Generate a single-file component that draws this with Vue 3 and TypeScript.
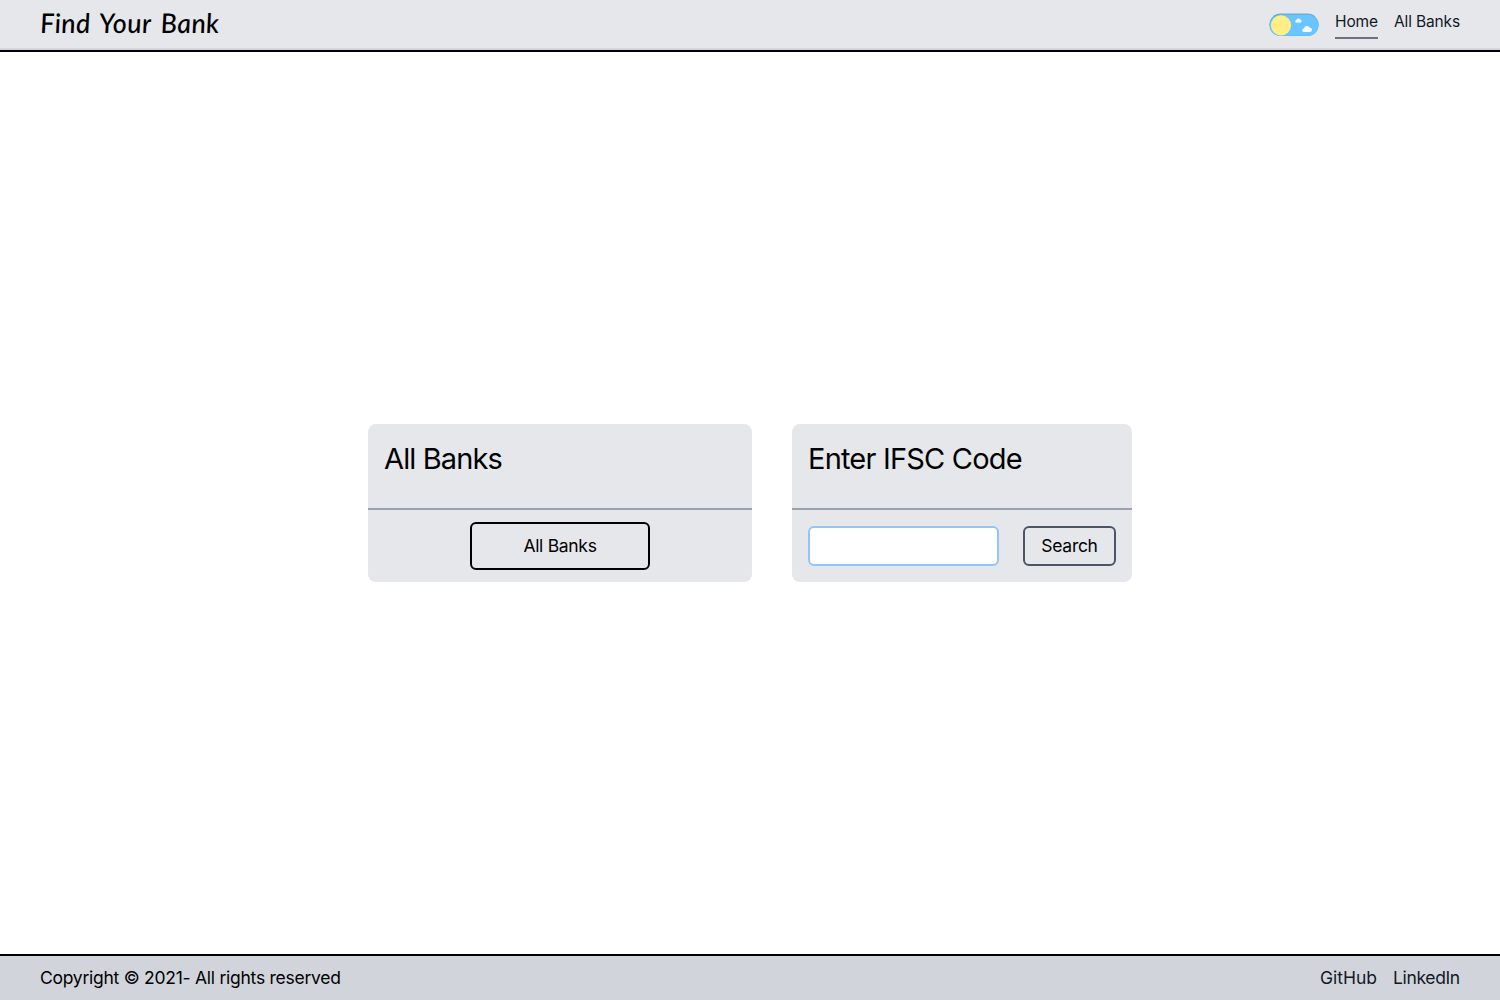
<script setup lang="ts">
import { ref } from 'vue'

const ifsc = ref('')
const year = 2021
</script>

<template>
  <div class="page">
    <header class="header">
      <h1 class="brand">Find Your Bank</h1>
      <nav class="nav">
        <svg class="toggle" width="50" height="24" viewBox="0 0 50 24" aria-hidden="true">
          <rect x="0.3" y="0.6" width="49.4" height="22.4" rx="11.2" fill="#62aedb" />
          <rect x="0.8" y="1.8" width="48.6" height="21" rx="10.5" fill="#69c5ff" />
          <circle cx="12" cy="12.4" r="10.1" fill="#ffed85" />
          <path d="M27 9.5a1.4 1.4 0 0 1 .4-2.6 2.2 2.2 0 0 1 4-.2 1.5 1.5 0 0 1 .3 2.8z" fill="#fff" />
          <path d="M34.5 18.9a1.8 1.8 0 0 1 .3-3.5 3.2 3.2 0 0 1 6-.7 2.1 2.1 0 0 1 .2 4.2z" fill="#fff" />
        </svg>
        <a class="link active">Home</a>
        <a class="link banks">All Banks</a>
      </nav>
    </header>

    <main class="main">
      <section class="card wide">
        <div class="card-head"><h2>All Banks</h2></div>
        <div class="card-body">
          <button class="all-button">All Banks</button>
        </div>
      </section>
      <section class="card narrow">
        <div class="card-head"><h2 class="ifsc-title">Enter IFSC Code</h2></div>
        <form class="card-body form" @submit.prevent>
          <input v-model="ifsc" class="field" type="text" aria-label="IFSC code" />
          <button class="search">Search</button>
        </form>
      </section>
    </main>

    <footer class="footer">
      <span class="copyright">Copyright © {{ year }}- All rights reserved</span>
      <div class="socials">
        <a class="github">GitHub</a>
        <a class="linkedin">LinkedIn</a>
      </div>
    </footer>
  </div>
</template>

<style>
body { margin: 0; }
</style>

<style scoped>
* { box-sizing: border-box; }
.page {
  display: flex;
  flex-direction: column;
  height: 100vh;
  background: #fff;
  color: #000;
  font: 17.5px/28px Inter, sans-serif;
}
.header {
  display: flex;
  justify-content: space-between;
  align-items: flex-start;
  height: 52px;
  padding: 0 40px;
  background: #e5e7eb;
  border-bottom: 2px solid #000;
  box-shadow: inset 0 -2px #d1d5db;
}
.brand {
  margin: 3px 0 0;
  font: italic 500 27px/40px Lato, sans-serif;
  letter-spacing: 0.35px;
  word-spacing: 3px;
  white-space: nowrap;
  transform: skewX(4deg);
}
.nav {
  display: flex;
  gap: 16px;
  color: #111827;
  font-size: 15.5px;
  line-height: 26px;
}
.toggle { display: block; margin-top: 13px; }
.link {
  height: 30px;
  margin-top: 9px;
  white-space: nowrap;
}
.active { width: 43px; border-bottom: 2px solid #6b7280; letter-spacing: -0.1px; }
.banks { width: 66px; letter-spacing: -0.14px; }
.main {
  flex: 1;
  display: flex;
  justify-content: center;
  align-items: center;
  gap: 40px;
}
.card {
  height: 158px;
  background: #e5e7eb;
  border-radius: 8px;
}
.wide { width: 384px; }
.narrow { width: 340px; }
.card-head {
  height: 86px;
  padding: 16px;
  border-bottom: 2px solid #9ca3af;
}
h2 {
  margin: 0;
  font-weight: 400;
  font-size: 29px;
  line-height: 38px;
  letter-spacing: -0.87px;
  white-space: nowrap;
}
.ifsc-title { letter-spacing: -0.8px; }
.card-body {
  display: flex;
  justify-content: center;
  align-items: center;
  height: 72px;
  padding: 0 16px;
}
.form { justify-content: space-between; }
button {
  padding: 0;
  background: transparent;
  border: 2px solid #000;
  border-radius: 6px;
  color: #000;
  font: inherit;
  letter-spacing: -0.3px;
}
.all-button { width: 180px; height: 48px; }
.field {
  width: 191px;
  height: 40px;
  padding: 0 8px;
  background: #fff;
  border: 2px solid #93c5fd;
  border-radius: 6px;
  outline: none;
  font: inherit;
}
.search { width: 93px; height: 40px; border-color: #4b5563; }
.footer {
  display: flex;
  justify-content: space-between;
  align-items: center;
  height: 46px;
  padding: 0 40px;
  background: #d1d5db;
  border-top: 2px solid #000;
}
.copyright { letter-spacing: -0.26px; }
.socials { display: flex; gap: 16px; color: #111827; }
.linkedin { width: 67px; letter-spacing: -0.35px; }
</style>
